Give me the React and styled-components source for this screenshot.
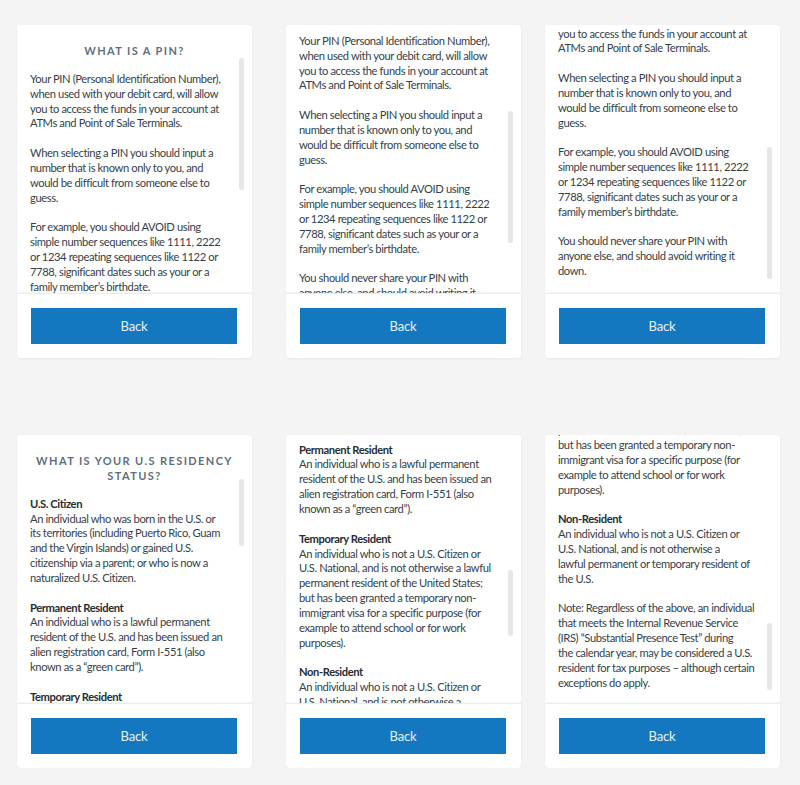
import React from "react";
import styled, { createGlobalStyle } from "styled-components";

const GlobalStyle = createGlobalStyle`
  body {
    margin: 0;
    background: #f4f4f4;
    font-family: Lato, "Noto Sans", sans-serif;
  }
`;

const pinTopic = {
  title: ["WHAT IS A PIN?"],
  sections: [
    {
      lines: [
        "Your PIN (Personal Identification Number),",
        "when used with your debit card, will allow",
        "you to access the funds in your account at",
        "ATMs and Point of Sale Terminals.",
      ],
    },
    {
      lines: [
        "When selecting a PIN you should input a",
        "number that is known only to you, and",
        "would be difficult from someone else to",
        "guess.",
      ],
    },
    {
      lines: [
        "For example, you should AVOID using",
        "simple number sequences like 1111, 2222",
        "or 1234 repeating sequences like 1122 or",
        "7788, significant dates such as your or a",
        "family member’s birthdate.",
      ],
    },
    {
      lines: [
        "You should never share your PIN with",
        "anyone else, and should avoid writing it",
        "down.",
      ],
    },
  ],
};

const residencyTopic = {
  title: ["WHAT IS YOUR U.S RESIDENCY", "STATUS?"],
  sections: [
    {
      heading: "U.S. Citizen",
      lines: [
        "An individual who was born in the U.S. or",
        "its territories (including Puerto Rico, Guam",
        "and the Virgin Islands) or gained U.S.",
        "citizenship via a parent; or who is now a",
        "naturalized U.S. Citizen.",
      ],
    },
    {
      heading: "Permanent Resident",
      lines: [
        "An individual who is a lawful permanent",
        "resident of the U.S. and has been issued an",
        "alien registration card, Form I-551 (also",
        "known as a “green card”).",
      ],
    },
    {
      heading: "Temporary Resident",
      lines: [
        "An individual who is not a U.S. Citizen or",
        "U.S. National, and is not otherwise a lawful",
        "permanent resident of the United States;",
        "but has been granted a temporary non-",
        "immigrant visa for a specific purpose (for",
        "example to attend school or for work",
        "purposes).",
      ],
    },
    {
      heading: "Non-Resident",
      lines: [
        "An individual who is not a U.S. Citizen or",
        "U.S. National, and is not otherwise a",
        "lawful permanent or temporary resident of",
        "the U.S.",
      ],
    },
    {
      lines: [
        "Note: Regardless of the above, an individual",
        "that meets the Internal Revenue Service",
        "(IRS) “Substantial Presence Test” during",
        "the calendar year, may be considered a U.S.",
        "resident for tax purposes – although certain",
        "exceptions do apply.",
      ],
    },
  ],
};

// each card shows the same text scrolled to a different spot
const cards = [
  { topic: pinTopic, offset: 0, thumbTop: 33, thumbHeight: 132 },
  { topic: pinTopic, offset: 38, thumbTop: 86, thumbHeight: 132 },
  { topic: pinTopic, offset: 75, thumbTop: 122, thumbHeight: 132 },
  { topic: residencyTopic, offset: 0, thumbTop: 44, thumbHeight: 67 },
  { topic: residencyTopic, offset: 158, thumbTop: 135, thumbHeight: 66 },
  { topic: residencyTopic, offset: 311, thumbTop: 188, thumbHeight: 67 },
];

const InfoCard = ({ topic, offset, thumbTop, thumbHeight }) => (
  <Card>
    <Viewport>
      <Content $offset={offset}>
        <Title>
          {topic.title.map((line) => (
            <Line key={line}>{line}</Line>
          ))}
        </Title>
        {topic.sections.map((section, i) => (
          <Section key={i}>
            {section.heading && <Heading>{section.heading}</Heading>}
            {section.lines.map((line) => (
              <Line key={line}>{line}</Line>
            ))}
          </Section>
        ))}
      </Content>
      <Thumb $top={thumbTop} $height={thumbHeight} />
    </Viewport>
    <Footer>
      <BackButton>Back</BackButton>
    </Footer>
  </Card>
);

const App = () => (
  <>
    <GlobalStyle />
    <Board>
      {cards.map((card, i) => (
        <InfoCard key={i} {...card} />
      ))}
    </Board>
  </>
);

export default App;

const Board = styled.div`
  display: grid;
  grid-template-columns: 269px 259px 235px;
  grid-auto-rows: 333px;
  row-gap: 77px;
  padding: 25px 0 0 17px;
`;

const Card = styled.div`
  width: 235px;
  display: flex;
  flex-direction: column;
  background: #fff;
  border-radius: 4px;
  box-shadow: 0 1px 3px rgba(0, 0, 0, 0.05);
  overflow: hidden;
`;

const Viewport = styled.div`
  position: relative;
  height: 268px;
  overflow: hidden;
`;

const Content = styled.div`
  padding: 19px 13px 15px 13px;
  margin-top: ${(p) => -p.$offset}px;
`;

const Title = styled.div`
  font-size: 11px;
  font-weight: 700;
  letter-spacing: 1.4px;
  color: #5f6f81;
  text-align: center;
  line-height: 15px;
  margin-bottom: 13px;
`;

const Line = styled.span`
  display: block;
  white-space: nowrap;
  line-height: 14.85px;
`;

const Section = styled.div`
  font-size: 11.2px;
  letter-spacing: -0.4px;
  color: #353f4a;
  & + & {
    margin-top: 14.85px;
  }
`;

const Heading = styled(Line)`
  font-weight: 700;
  color: #262d35;
`;

const Thumb = styled.div`
  position: absolute;
  right: 8px;
  top: ${(p) => p.$top}px;
  width: 5px;
  height: ${(p) => p.$height}px;
  border-radius: 3px;
  background: #e6e6e6;
`;

const Footer = styled.div`
  height: 65px;
  box-sizing: border-box;
  padding: 14px 15px 14px 14px;
  border-top: 1px solid #ececec;
  box-shadow: 0 -1px 2px rgba(0, 0, 0, 0.04);
`;

const BackButton = styled.button`
  display: block;
  width: 206px;
  height: 36px;
  padding: 0;
  border: 0;
  border-radius: 0;
  background: #1378bf;
  color: #e9f2f9;
  font-family: Lato, "Noto Sans", sans-serif;
  font-size: 13px;
  letter-spacing: -0.2px;
  cursor: pointer;
`;
